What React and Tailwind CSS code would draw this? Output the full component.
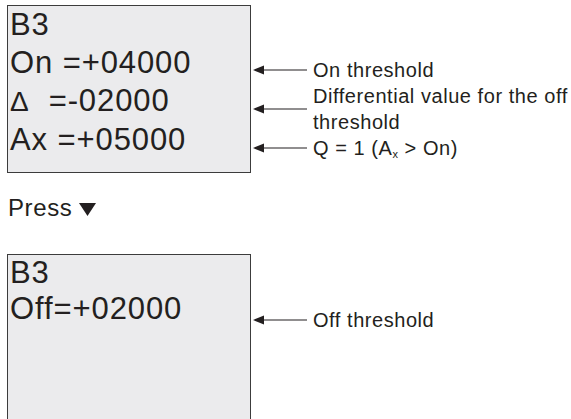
import React from 'react';

const font = { fontFamily: '"Liberation Sans", Arial, sans-serif' };

const Arrow = () => (
    <svg width="54" height="10" viewBox="0 0 54 10" className="shrink-0">
        <line x1="8" y1="5" x2="54" y2="5" stroke="#231f20" strokeWidth="1.2" />
        <polygon points="0,5 11,0.5 11,9.5" fill="#231f20" />
    </svg>
);

const Note = ({ children }) => (
    <div className="flex items-center">
        <Arrow />
        <div className="ml-[6px] text-[20px] leading-[26px] tracking-[0.55px] text-[#231f20]">{children}</div>
    </div>
);

const Display = ({ lines, className }) => (
    <div className={`w-[244px] shrink-0 border-[1.5px] border-[#3c3c3c] bg-[#ebebed] pl-[2px] text-[31px] tracking-[0.9px] text-[#231f20] ${className}`}>
        {lines.map((line, i) => (
            <div key={i} className="whitespace-pre">{line}</div>
        ))}
    </div>
);

export default function App() {
    return (
        <div className="w-[571px] h-[419px] overflow-hidden bg-white pl-[7px] pt-[5px]" style={font}>
            {/* first display */}
            <div className="flex items-start">
                <Display
                    className="h-[168px] leading-[38px]"
                    lines={['B3', 'On =+04000', <span key="d"><span className="text-[28px]">Δ</span>  =-02000</span>, 'Ax =+05000']}
                />
                <div className="ml-[2px] mt-[52px] flex flex-col">
                    <Note>On threshold</Note>
                    <Note>
                        Differential value for the off
                        <br />
                        threshold
                    </Note>
                    <Note>
                        Q = 1 (A<sub className="text-[11px] relative top-[3px] align-baseline">x</sub> &gt; On)
                    </Note>
                </div>
            </div>

            {/* press down */}
            <div className="mt-[20px] flex items-center text-[24px] leading-[29px] tracking-[0.6px] text-[#231f20]">
                <span className="pl-[1px]">Press</span>
                <svg width="17" height="13" viewBox="0 0 17 13" className="ml-[7px] mt-[3px]">
                    <polygon points="0,0 17,0 8.5,13" fill="#231f20" />
                </svg>
            </div>

            {/* second display */}
            <div className="mt-[32px] flex items-start">
                <Display className="h-[200px] leading-[36px]" lines={['B3', 'Off=+02000']} />
                <div className="ml-[2px] mt-[53px] flex flex-col">
                    <Note>Off threshold</Note>
                </div>
            </div>
        </div>
    );
}
